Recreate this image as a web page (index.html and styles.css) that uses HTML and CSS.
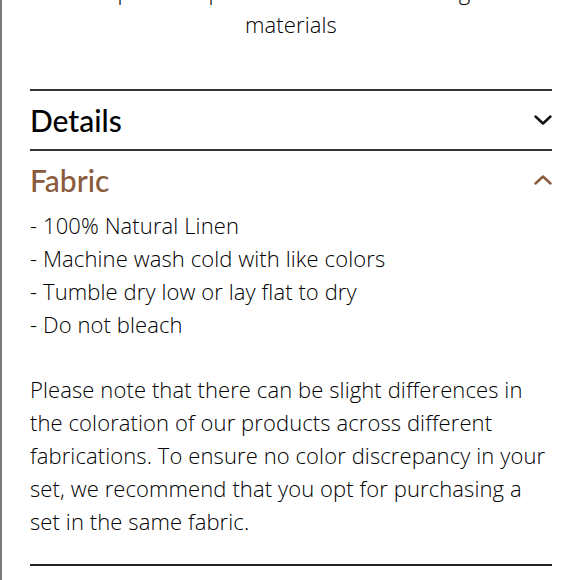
FILE: index.html
```html
<!DOCTYPE html>
<html lang="en">
<head>
<meta charset="utf-8">
<title>Product details</title>
<link rel="stylesheet" href="styles.css">
</head>
<body>
<div class="page">
  <p class="intro">Compared to products that use non-organic<br>materials</p>
  <section class="acc">
    <div class="acc-head">
      <h2 class="acc-title">Details</h2>
      <svg class="chev" width="18" height="10" viewBox="0 0 18 10"><path d="M1.5 1.5 L9 8.5 L16.5 1.5" fill="none" stroke="#111" stroke-width="2.4" stroke-linecap="round" stroke-linejoin="round"/></svg>
    </div>
  </section>
  <section class="acc open">
    <div class="acc-head">
      <h2 class="acc-title brown">Fabric</h2>
      <svg class="chev" width="18" height="10" viewBox="0 0 18 10"><path d="M1.5 8.5 L9 1.5 L16.5 8.5" fill="none" stroke="#8a5a3c" stroke-width="2.4" stroke-linecap="round" stroke-linejoin="round"/></svg>
    </div>
    <div class="acc-body">
      <ul class="list">
        <li>- 100% Natural Linen</li>
        <li>- Machine wash cold with like colors</li>
        <li>- Tumble dry low or lay flat to dry</li>
        <li>- Do not bleach</li>
      </ul>
      <p class="note">Please note that there can be slight differences in<br>the coloration of our products across different<br>fabrications. To ensure no color discrepancy in your<br>set, we recommend that you opt for purchasing a<br>set in the same fabric.</p>
    </div>
  </section>
  <div class="rule"></div>
</div>
</body>
</html>
```
FILE: styles.css
```css
html, body {
  margin: 0;
  padding: 0;
  background: #fff;
  height: 100%;
}
body {
  font-family: "Open Sans", "Lato", sans-serif;
  font-weight: 300;
  color: #000;
  overflow: hidden;
  border-left: 2px solid #7a7a7a;
  box-sizing: border-box;
}
.page {
  padding: 0 28px;
  width: 578px;
  box-sizing: border-box;
}
.intro {
  margin: -25px 0 0 0;
  text-align: center;
  font-size: 22px;
  letter-spacing: 0.1px;
  line-height: 33px;
  padding: 0 0 48px;
  white-space: nowrap;
}
.acc {
  border-top: 2px solid #333;
}
.acc-head {
  display: flex;
  align-items: center;
  justify-content: space-between;
  height: 58px;
}
.acc-title {
  margin: 0;
  font-family: "Lato", sans-serif;
  font-size: 30px;
  font-weight: 500;
  color: #000;
}
.acc-title.brown {
  color: #8a5a3c;
}
.chev {
  display: block;
}
.list {
  list-style: none;
  margin: 0;
  padding: 0;
}
.list li, .note {
  font-size: 22px;
  letter-spacing: 0.1px;
  line-height: 33px;
}
.note {
  margin: 32px 0 0;
  white-space: nowrap;
}
.rule {
  border-top: 2px solid #222;
  margin-top: 26px;
}
```
